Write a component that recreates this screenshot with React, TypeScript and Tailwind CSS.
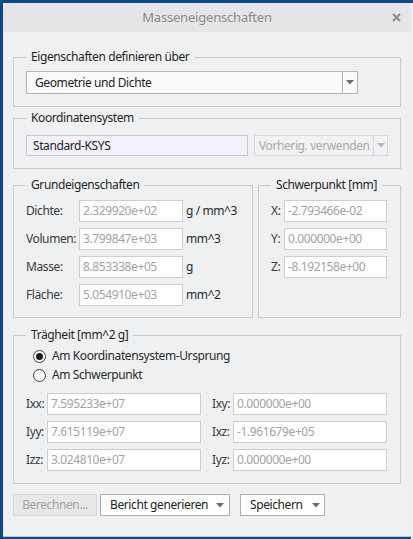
import React from "react";

const font = { fontFamily: '"Segoe UI", "Noto Sans", "Open Sans", sans-serif' };

function Tri({ color = "#6b6b6b" }: { color?: string }) {
  return (
    <svg width="8" height="5" viewBox="0 0 8 5">
      <path d="M0 0 H8 L4 4.5 Z" fill={color} />
    </svg>
  );
}

function ValueInput({ value, w }: { value: string; w: string }) {
  return (
    <div className={`${w} h-[22px] bg-white border border-[#cfcfcf] flex items-center pl-[3px] text-[12px] text-[#a3a3a3] leading-none whitespace-nowrap`}>
      {value}
    </div>
  );
}

function Legend({ children }: { children: React.ReactNode }) {
  return (
    <legend className="ml-[12px] px-[5px] text-[12px] leading-[16px] text-[#1f1f1f] whitespace-nowrap">{children}</legend>
  );
}

function Radio({ checked, label }: { checked?: boolean; label: string }) {
  return (
    <div className="h-[18px] flex items-center">
      <div className="w-[13px] h-[13px] rounded-full border border-[#3c3c3c] bg-white flex items-center justify-center ml-[3px]">
        {checked && <div className="w-[7px] h-[7px] rounded-full bg-[#1c1c1c]" />}
      </div>
      <span className="ml-[6px] text-[12px] text-[#2a2a2a]">{label}</span>
    </div>
  );
}

export default function App() {
  const grund = [
    { l: "Dichte:", v: "2.329920e+02", u: "g / mm^3" },
    { l: "Volumen:", v: "3.799847e+03", u: "mm^3" },
    { l: "Masse:", v: "8.853338e+05", u: "g" },
    { l: "Fläche:", v: "5.054910e+03", u: "mm^2" },
  ];
  const schwer = [
    { l: "X:", v: "-2.793466e-02" },
    { l: "Y:", v: "0.000000e+00" },
    { l: "Z:", v: "-8.192158e+00" },
  ];
  const traeg = [
    ["Ixx:", "7.595233e+07", "Ixy:", "0.000000e+00"],
    ["Iyy:", "7.615119e+07", "Ixz:", "-1.961679e+05"],
    ["Izz:", "3.024810e+07", "Iyz:", "0.000000e+00"],
  ];
  return (
    <div style={font} className="w-[413px] h-[539px] bg-[#0b4a87] pt-[3px] pl-[3px] flex overflow-hidden tracking-[-0.4px]">
      <div className="w-[408px] h-[534px] bg-[#eff0f2] border-b border-[#c6c6c6] flex flex-col">
        <div className="h-[29px] shrink-0 bg-[#e5e6e8] grid grid-cols-[1fr_auto_1fr] items-center">
          <div />
          <div className="text-[13px] text-[#8a8a8a] tracking-[-0.2px]">Masseneigenschaften</div>
          <div className="flex justify-end pr-[10px]">
            <svg width="9" height="9" viewBox="0 0 9 9">
              <path d="M1 1 L8 8 M8 1 L1 8" stroke="#8f8f8f" strokeWidth="2.2" />
            </svg>
          </div>
        </div>
        <div className="px-[10px] pt-[17px] flex flex-col">
          <fieldset className="border border-[#cacaca]">
            <Legend>Eigenschaften definieren über</Legend>
            <div className="pt-[6px] pb-[12px] pl-[12px]">
              <div className="w-[332px] h-[23px] bg-[#fafafa] border border-[#b5b5b5] flex">
                <div className="flex-1 flex items-center pl-[8px] text-[12px] text-[#222]">Geometrie und Dichte</div>
                <div className="w-[15px] border-l border-[#b5b5b5] flex items-center justify-center">
                  <Tri />
                </div>
              </div>
            </div>
          </fieldset>

          <fieldset className="border border-[#cacaca] mt-[3px]">
            <Legend>Koordinatensystem</Legend>
            <div className="pt-[9px] pb-[12px] pl-[12px] flex gap-[6px]">
              <div className="w-[222px] h-[21px] bg-[#f3f0fc] border border-[#c9c9c9] flex items-center pl-[6px] text-[12px] text-[#222]">
                Standard-KSYS
              </div>
              <div className="w-[134px] h-[21px] bg-[#f1f2f3] border border-[#dadada] flex">
                <div className="flex-1 flex items-center pl-[4px] text-[12px] text-[#a9a9a9] whitespace-nowrap overflow-hidden">Vorherig. verwenden</div>
                <div className="w-[14px] shrink-0 border-l border-[#dadada] flex items-center justify-center">
                  <Tri color="#b5b5b5" />
                </div>
              </div>
            </div>
          </fieldset>

          <div className="flex gap-[5px] mt-[8px]">
            <fieldset className="w-[240px] border border-[#cacaca]">
              <Legend>Grundeigenschaften</Legend>
              <div className="pt-[7px] pb-[11px] pl-[12px] flex flex-col gap-[6px]">
                {grund.map((r) => (
                  <div key={r.l} className="flex items-center">
                    <div className="w-[53px] text-[12px] text-[#3a3a3a]">{r.l}</div>
                    <ValueInput value={r.v} w="w-[104px]" />
                    <div className="ml-[3px] text-[12px] text-[#2a2a2a] whitespace-nowrap">{r.u}</div>
                  </div>
                ))}
              </div>
            </fieldset>
            <fieldset className="flex-1 border border-[#cacaca]">
              <Legend>Schwerpunkt [mm]</Legend>
              <div className="pt-[7px] pl-[12px] flex flex-col gap-[6px]">
                {schwer.map((r) => (
                  <div key={r.l} className="flex items-center">
                    <div className="w-[13px] text-[12px] text-[#3a3a3a]">{r.l}</div>
                    <ValueInput value={r.v} w="w-[103px]" />
                  </div>
                ))}
              </div>
            </fieldset>
          </div>

          <fieldset className="border border-[#cacaca] mt-[9px]">
            <Legend>Trägheit [mm^2 g]</Legend>
            <div className="pt-[4px] pb-[12px] pl-[12px] flex flex-col">
              <div className="flex flex-col gap-[1px] pl-[4px]">
                <Radio checked label="Am Koordinatensystem-Ursprung" />
                <Radio label="Am Schwerpunkt" />
              </div>
              <div className="mt-[9px] flex flex-col gap-[6px]">
                {traeg.map((r) => (
                  <div key={r[0]} className="flex items-center">
                    <div className="w-[21px] text-[12px] text-[#3a3a3a]">{r[0]}</div>
                    <ValueInput value={r[1]} w="w-[154px]" />
                    <div className="ml-[11px] w-[21px] text-[12px] text-[#3a3a3a]">{r[2]}</div>
                    <ValueInput value={r[3]} w="w-[154px]" />
                  </div>
                ))}
              </div>
            </div>
          </fieldset>

          <div className="mt-[10px] flex">
            <div className="w-[84px] h-[22px] bg-[#e7e8ea] border border-[#d6d6d6] flex items-center justify-center text-[12px] text-[#a3a3a3]">
              Berechnen...
            </div>
            <div className="ml-[3px] w-[130px] h-[22px] bg-white border border-[#adadad] flex items-center pl-[9px] pr-[5px] justify-between text-[12px] text-[#222] whitespace-nowrap">
              <span>Bericht generieren</span>
              <Tri />
            </div>
            <div className="ml-[10px] w-[85px] h-[22px] bg-white border border-[#adadad] flex items-center pl-[9px] pr-[4px] justify-between text-[12px] text-[#222]">
              <span>Speichern</span>
              <Tri />
            </div>
          </div>
        </div>
      </div>
      <div className="w-[2px] h-full bg-[#f2f2f2]" />
    </div>
  );
}
